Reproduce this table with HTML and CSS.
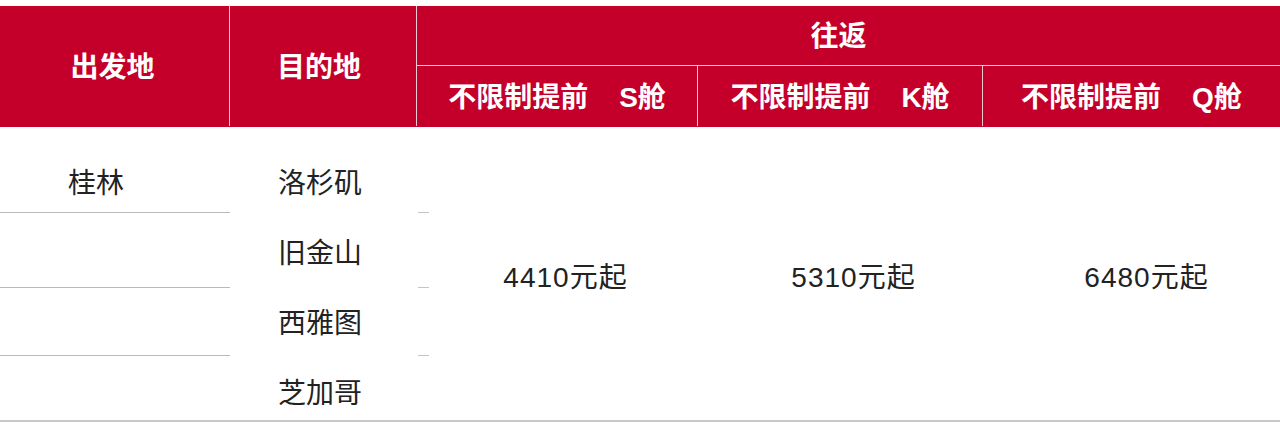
FILE: index.html
```html
<!DOCTYPE html>
<html lang="zh-CN">
<head>
<meta charset="utf-8">
<title>往返票价</title>
<link rel="stylesheet" href="styles.css">
</head>
<body>
<div class="table">
  <div class="head">
    <div class="hcell h-origin">出发地</div>
    <div class="hcell h-dest">目的地</div>
    <div class="hcell h-round">往返</div>
    <div class="hcell sub">不限制提前<span class="cls">S舱</span></div>
    <div class="hcell sub">不限制提前<span class="cls">K舱</span></div>
    <div class="hcell sub">不限制提前<span class="cls">Q舱</span></div>
  </div>
  <div class="body">
    <div class="origin">
      <div class="ocell first"><span class="otext">桂林</span></div>
      <div class="ocell second"></div>
      <div class="ocell third"></div>
      <div class="ocell fourth"></div>
    </div>
    <div class="dest">
      <div class="dtext">洛杉矶</div>
      <div class="dtext">旧金山</div>
      <div class="dtext">西雅图</div>
      <div class="dtext">芝加哥</div>
    </div>
    <div class="price p1">4410元起</div>
    <div class="price p2">5310元起</div>
    <div class="price p3">6480元起</div>
  </div>
</div>
</body>
</html>
```
FILE: styles.css
```css
html, body {
  margin: 0;
  padding: 0;
  background: #ffffff;
}
body {
  padding-top: 6px;
  font-family: "Liberation Sans", "Noto Sans CJK SC", sans-serif;
  width: 1280px;
  overflow: hidden;
}
.table {
  width: 1280px;
}
.head {
  display: grid;
  grid-template-columns: 229px 186px 280px 284px 1fr;
  grid-template-rows: 59px 60px;
  gap: 1px;
  background: #f3c9d3;
  border-bottom: 1px solid #c4002a;
}
.hcell {
  background: #c4002a;
  color: #ffffff;
  font-weight: 700;
  font-size: 28px;
  display: flex;
  align-items: center;
  justify-content: center;
  line-height: 1;
}
.h-origin {
  grid-column: 1;
  grid-row: 1 / span 2;
  padding-right: 4px;
  padding-top: 3px;
}
.h-dest {
  grid-column: 2;
  grid-row: 1 / span 2;
  padding-right: 8px;
  padding-top: 3px;
}
.h-round {
  grid-column: 3 / span 3;
  grid-row: 1;
  padding-top: 2px;
  padding-right: 20px;
}
.sub {
  grid-row: 2;
  padding-top: 4px;
}
.cls {
  margin-left: 31px;
}
.body {
  display: grid;
  grid-template-columns: 230px 187px 281px 285px 1fr;
  height: 293px;
  border-bottom: 2px solid #c9c9c9;
  color: #222222;
  font-size: 28px;
}
.origin {
  display: flex;
  flex-direction: column;
}
.ocell {
  border-bottom: 1px solid #b9b9b9;
}
.first {
  height: 85px;
}
.second { height: 74px; }
.third { height: 67px; }
.fourth {
  height: 64px;
  border-bottom: none;
}
.otext {
  display: block;
  line-height: 40px;
  padding-top: 37px;
  padding-left: 68px;
}
.dest {
  display: flex;
  flex-direction: column;
  align-items: center;
  gap: 30px;
  padding-top: 37px;
  padding-right: 7px;
}
.dtext {
  line-height: 40px;
}
.price {
  display: flex;
  align-items: center;
  justify-content: center;
  padding-top: 8px;
  line-height: 40px;
  letter-spacing: 1px;
}
.p1 {
  padding-left: 16px;
  background-image:
    linear-gradient(#c4c4c4, #c4c4c4),
    linear-gradient(#c4c4c4, #c4c4c4),
    linear-gradient(#c4c4c4, #c4c4c4);
  background-repeat: no-repeat;
  background-size: 11px 1px;
  background-position: 1px 85px, 1px 160px, 1px 228px;
}
.p2 {
  padding-left: 26px;
}
.p3 {
  padding-left: 30px;
}
```
